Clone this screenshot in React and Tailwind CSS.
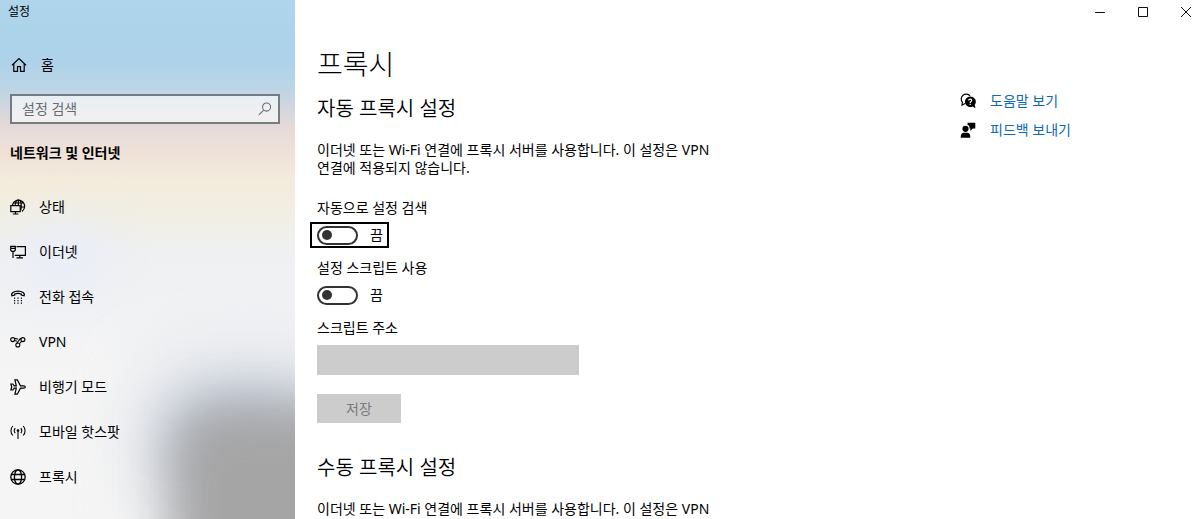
import React, { useState } from 'react';

function Icon({ children, className = 'w-4 h-4', strokeWidth = 1.2 }) {
  return (
    <svg
      viewBox="0 0 16 16"
      className={`${className} shrink-0`}
      fill="none"
      stroke="currentColor"
      strokeWidth={strokeWidth}
      aria-hidden="true"
    >
      {children}
    </svg>
  );
}

const HomeIcon = () => (
  <Icon>
    <path d="M1 8.2 8 1.5l7 6.7M2.8 6.8v7.6h3.7V9.6h3v4.8h3.7V6.8" />
  </Icon>
);

const SearchIcon = () => (
  <Icon className="w-3.5 h-3.5">
    <circle cx="9.8" cy="5.8" r="4.6" />
    <path d="M6.4 9.2 1 14.8" />
  </Icon>
);

const StatusIcon = () => (
  <Icon>
    <path d="M2.4 6A6.2 6.2 0 1 1 12 12.4M3.2 4h10.4M11 8h3.6M5.2 6C5.600 3 6.800.9 8.300.9c1.700 0 3 2.800 3 6.200 0 1.600-.2 3-.6 4.200M8.300.9V6" />
    <path d="M.8 6.700h9.400v6H.8zM2.800 15h5.600M5.500 12.700V15" />
  </Icon>
);

const EthernetIcon = () => (
  <Icon>
    <path d="M6.500 2.600h8.900v8.800H4.800M9.800 11.400v2.500M6.500 13.900H13" />
    <path d="M.7 2.300h4.600v3.900L4.200 7.400H1.800L.7 6.200zM3 7.400v6.700M.7 4.400h4.600" />
  </Icon>
);

const DialupIcon = () => (
  <Icon>
    <path d="M1.800 6.700C.6 4.500 3.800 2.100 8 2.100s7.400 2.400 6.200 4.600L11.300 6.100V5C9.500 4.300 6.500 4.300 4.700 5v1.100z" />
    <g fill="currentColor" stroke="none">
      <path d="M4 8.500h1.200v1.200H4zM7.400 8.500h1.200v1.200H7.400zM10.800 8.500H12v1.200h-1.200zM4 11h1.200v1.200H4zM7.400 11h1.200v1.200H7.400zM10.800 11H12v1.200h-1.200zM4 13.500h1.200v1.200H4zM7.400 13.500h1.200v1.200H7.400zM10.800 13.500H12v1.200h-1.200z" />
    </g>
  </Icon>
);

const VpnIcon = () => (
  <Icon strokeWidth={1.1}>
    <circle cx="2.700" cy="5.600" r="2" />
    <circle cx="12.900" cy="5.600" r="2" />
    <circle cx="7.800" cy="11" r="2" />
    <path d="M4.400 4.500C6 4 6.700 5.200 8 5.200M4.500 6.500 7 7.200M11.300 4.400C9 4.600 8.300 8 6.200 9.800M12.200 7.500C10.800 7.500 10 8.600 9.500 9.900" />
  </Icon>
);

const AirplaneIcon = () => (
  <Icon>
    <path d="M15.300 8c0 .8-.8 1.200-1.600 1.200h-3.200l-3.200 6H4.900l1.400-6H4.200L2.900 11H.9l.8-3L.9 5h2l1.300 1.800h2.100l-1.400-6h2.400l3.200 6h3.200c.8 0 1.600.4 1.600 1.200z" />
  </Icon>
);

const HotspotIcon = () => (
  <Icon strokeWidth={1.1}>
    <path d="M8 6.500v8.500M5.200 9.200a4 4 0 0 1 0-5M10.800 9.200a4 4 0 0 0 0-5M2.800 11.500a7 7 0 0 1 0-9.500M13.200 11.500a7 7 0 0 0 0-9.500" />
    <circle cx="8" cy="6.500" r=".8" fill="currentColor" />
  </Icon>
);

const GlobeIcon = () => (
  <Icon strokeWidth={1.3}>
    <circle cx="8" cy="8" r="7.200" />
    <ellipse cx="8" cy="8" rx="3.600" ry="7.200" />
    <path d="M1.500 5.500h13M1.500 10.500h13" />
  </Icon>
);

const HelpIcon = () => (
  <Icon>
    <path d="M5.500 10.300 2 12.200l.4-3A4.900 4.900 0 1 1 10 2.800" />
    <path
      d="M10.200 3.400a5.300 5.300 0 1 0 2.300 10.100l3 1.700-.8-3.300a5.300 5.300 0 0 0-4.500-8.500z"
      fill="currentColor"
      stroke="none"
    />
    <path d="M8.700 7.500c0-1.900 3-1.800 3 0 0 1.100-1.500 1.100-1.500 2.400M10.200 10.800V12" stroke="#fff" />
  </Icon>
);

const FeedbackIcon = () => (
  <Icon>
    <g fill="currentColor" stroke="none">
      <circle cx="5.500" cy="6.800" r="3.100" />
      <path d="M.8 15.800V14c0-1.900 1.300-3.200 3-3.200h3.400c1.800 0 3 1.300 3 3.200v1.800z" />
      <path d="M7.500.8h7.800v5.700h-2.600l-2.400 2.400V6.500H9.600C9.700 4.600 8.900 3.200 7.500 2.700z" />
    </g>
  </Icon>
);

const navItems = [
  { label: '상태', Glyph: StatusIcon },
  { label: '이더넷', Glyph: EthernetIcon },
  { label: '전화 접속', Glyph: DialupIcon },
  { label: 'VPN', Glyph: VpnIcon },
  { label: '비행기 모드', Glyph: AirplaneIcon },
  { label: '모바일 핫스팟', Glyph: HotspotIcon },
  { label: '프록시', Glyph: GlobeIcon },
];

const helpLinks = [
  { label: '도움말 보기', Glyph: HelpIcon },
  { label: '피드백 보내기', Glyph: FeedbackIcon },
];

const windowButtons = [
  { label: '최소화', d: 'M0 5.500h10' },
  { label: '최대화', d: 'M.5.5h9v9h-9z' },
  { label: '닫기', d: 'M0 0l10 10M10 0L0 10' },
];

function Sidebar() {
  return (
    <aside className="relative isolate w-[295px] shrink-0 overflow-hidden bg-[linear-gradient(to_bottom,#aed5eb_0px,#add2e9_60px,#bdd5e5_90px,#e2d8d8_122px,#eee1d8_150px,#f3ebdb_180px,#f1efe4_215px,#eff0f1_250px,#f1f2f4_310px,#f5f5f5_370px)]">
      {/* Acrylic backdrop tints */}
      <div className="absolute -z-10 left-6 top-56 w-20 h-16 rounded-full bg-[#e8edfa] blur-xl" />
      <div className="absolute -z-10 left-40 -right-8 top-[380px] h-28 rounded-tl-3xl bg-[#bcc6d8] blur-2xl" />
      <div className="absolute -z-10 left-[170px] -right-16 top-[404px] -bottom-20 rounded-tl-[50px] bg-[#a5a5a6] blur-xl" />

      <div className="h-6 px-2 text-xs leading-6">설정</div>

      <a href="#home" className="mt-7 h-[26px] px-[11px] flex items-center gap-3.5">
        <HomeIcon />
        <span>홈</span>
      </a>

      <label className="mt-4 ml-2.5 mr-[15px] h-[30px] pl-2.5 pr-1.5 flex items-center border-2 border-[#757c82] bg-white/60 text-[#666b70]">
        <input
          type="search"
          aria-label="설정 검색"
          placeholder="설정 검색"
          className="flex-1 min-w-0 bg-transparent outline-none placeholder:text-[#666b70]"
        />
        <SearchIcon />
      </label>

      <h2 className="mt-[19px] px-2.5 leading-5 font-bold">네트워크 및 인터넷</h2>

      <nav className="mt-[21px]">
        {navItems.map(({ label, Glyph }) => (
          <a key={label} href="#nav" className="h-[45px] px-2.5 flex items-center gap-[13px]">
            <Glyph />
            <span>{label}</span>
          </a>
        ))}
      </nav>
    </aside>
  );
}

function Toggle({ id, label, focused }) {
  const [on, setOn] = useState(false);

  return (
    <div className="mb-[11px]">
      <label htmlFor={id} className="block">{label}</label>
      <div
        className={`mt-[5px] -ml-[7px] h-[26px] w-fit pl-[5px] pr-1 flex items-center gap-3 border-2 ${
          focused ? 'border-black' : 'border-transparent'
        }`}
      >
        <input
          id={id}
          type="checkbox"
          role="switch"
          checked={on}
          onChange={(e) => setOn(e.target.checked)}
          className="appearance-none w-[41px] h-[19px] flex items-center px-[3px] rounded-full border-2 border-[#333] before:w-[10px] before:h-[10px] before:rounded-full before:bg-[#333] checked:justify-end"
        />
        <span>{on ? '켬' : '끔'}</span>
      </div>
    </div>
  );
}

function Section({ title, description, children }) {
  return (
    <section>
      <h2 className="text-xl leading-7 font-[350]">{title}</h2>
      <p className="mt-[18px] max-w-[420px] break-keep">{description}</p>
      {children}
    </section>
  );
}

export default function App() {
  return (
    <div
      lang="ko"
      className="h-screen flex overflow-hidden bg-white text-black text-sm leading-[18px] font-['Noto_Sans','Noto_Sans_CJK_KR',sans-serif]"
    >
      <Sidebar />

      <div className="flex-1 min-w-0 flex flex-col">
        <header className="h-6 shrink-0 flex justify-end gap-[15px]">
          {windowButtons.map(({ label, d }) => (
            <button key={label} aria-label={label} className="w-7 flex items-center justify-center">
              <svg viewBox="0 0 10 10" className="w-2.5 h-2.5" fill="none" stroke="#111">
                <path d={d} />
              </svg>
            </button>
          ))}
        </header>

        <div className="flex-1 min-h-0 pt-[22px] pl-[22px] flex">
          <main className="flex-1 min-w-0">
            <h1 className="mb-[13px] text-[28px] leading-9 font-light">프록시</h1>

            <Section
              title="자동 프록시 설정"
              description="이더넷 또는 Wi-Fi 연결에 프록시 서버를 사용합니다. 이 설정은 VPN 연결에 적용되지 않습니다."
            >
              <div className="mt-[22px]">
                <Toggle id="auto-detect" label="자동으로 설정 검색" focused />
                <Toggle id="use-script" label="설정 스크립트 사용" />
              </div>

              <label htmlFor="script-address" className="block">스크립트 주소</label>
              <input
                id="script-address"
                type="text"
                disabled
                className="block mt-2 w-[262px] h-[30px] px-2 bg-[#ccc]"
              />
              <button disabled className="block mt-[19px] mb-[31px] w-[84px] h-[29px] bg-[#ccc] text-[#7a7a7a]">
                저장
              </button>
            </Section>

            <Section
              title="수동 프록시 설정"
              description="이더넷 또는 Wi-Fi 연결에 프록시 서버를 사용합니다. 이 설정은 VPN"
            />
          </main>

          <aside className="w-60 shrink-0 pt-[42px] flex flex-col gap-[3px]">
            {helpLinks.map(({ label, Glyph }) => (
              <a key={label} href="#help" className="h-[26px] flex items-center gap-3.5">
                <Glyph />
                <span className="text-[#0f6ab0]">{label}</span>
              </a>
            ))}
          </aside>
        </div>
      </div>
    </div>
  );
}
